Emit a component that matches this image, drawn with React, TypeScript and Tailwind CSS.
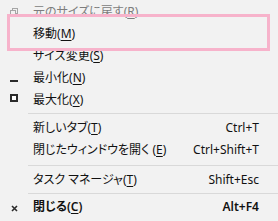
import type { ReactNode } from 'react';

type Item = {
  label: string;
  key: string;
  tail?: string;
  shortcut?: string;
  icon?: ReactNode;
  disabled?: boolean;
  bold?: boolean;
};

// ウィンドウメニュー用の小さなアイコン
const RestoreIcon = (
  <svg width="12" height="12" viewBox="0 0 12 12">
    <rect x="2.5" y="2.5" width="5" height="5" fill="none" stroke="#a6a6a6" strokeWidth="1" />
    <rect x="0.5" y="4.5" width="5" height="5" fill="#f2f2f2" stroke="#a6a6a6" strokeWidth="1" />
  </svg>
);

const MinimizeIcon = (
  <svg width="12" height="12" viewBox="0 0 12 12">
    <rect x="0" y="8" width="8" height="2" fill="#2b2b2b" />
  </svg>
);

const MaximizeIcon = (
  <svg width="12" height="12" viewBox="0 0 12 12">
    <rect x="1" y="0" width="6" height="6" fill="#ffffff" stroke="#2b2b2b" strokeWidth="2" transform="translate(0 1)" />
  </svg>
);

const CloseIcon = (
  <svg width="12" height="12" viewBox="0 0 12 12">
    <path d="M2 5 L7 10 M7 5 L2 10" stroke="#2b2b2b" strokeWidth="1.6" />
  </svg>
);

const groups: Item[][] = [
  [
    { label: '元のサイズに戻す', key: 'R', icon: RestoreIcon, disabled: true },
    { label: '移動', key: 'M' },
    { label: 'サイズ変更', key: 'S' },
    { label: '最小化', key: 'N', icon: MinimizeIcon },
    { label: '最大化', key: 'X', icon: MaximizeIcon },
  ],
  [
    { label: '新しいタブ', key: 'T', shortcut: 'Ctrl+T' },
    { label: '閉じたウィンドウを開く', key: 'E', shortcut: 'Ctrl+Shift+T', tail: ' ' },
  ],
  [{ label: 'タスク マネージャ', key: 'T', shortcut: 'Shift+Esc' }],
  [{ label: '閉じる', key: 'C', shortcut: 'Alt+F4', icon: CloseIcon, bold: true }],
];

// 区切り線ごとの上下余白
const separators = ['mt-[2px] mb-[3px]', 'mt-[4px] mb-[3px]', 'mt-[2px] mb-[2px]'];

function MenuRow({ item }: { item: Item }) {
  return (
    <div
      className={`flex items-center h-[22px] ${item.disabled ? 'text-[#7d7d7d]' : 'text-[#111111]'} ${
        item.bold ? 'font-semibold' : ''
      }`}
    >
      <div className="w-[33px] pl-[10px] flex items-center">{item.icon}</div>
      <div className="flex-1 whitespace-nowrap">
        {item.label}
        {item.tail}(<span className="underline underline-offset-[2px]">{item.key}</span>)
      </div>
      {item.shortcut && <div className="pr-[19px] whitespace-nowrap">{item.shortcut}</div>}
    </div>
  );
}

export default function App() {
  return (
    <div
      className="relative w-[278px] h-[221px] overflow-hidden bg-[#f2f2f2] pt-px text-[12px] [font-feature-settings:'palt']"
      style={{ fontFamily: "'Noto Sans', 'Noto Sans CJK JP', sans-serif" }}
    >
      {groups.map((group, gi) => (
        <div key={gi}>
          {gi > 0 && <div className={`ml-[28px] h-px bg-[#d9d9d9] ${separators[gi - 1]}`} />}
          {group.map((item) => (
            <MenuRow key={item.label} item={item} />
          ))}
        </div>
      ))}

      {/* 注釈の枠 */}
      <div className="absolute left-[7px] top-[14px] w-[263px] h-[37px] border-[3px] border-[#f7b3cb]" />
    </div>
  );
}
